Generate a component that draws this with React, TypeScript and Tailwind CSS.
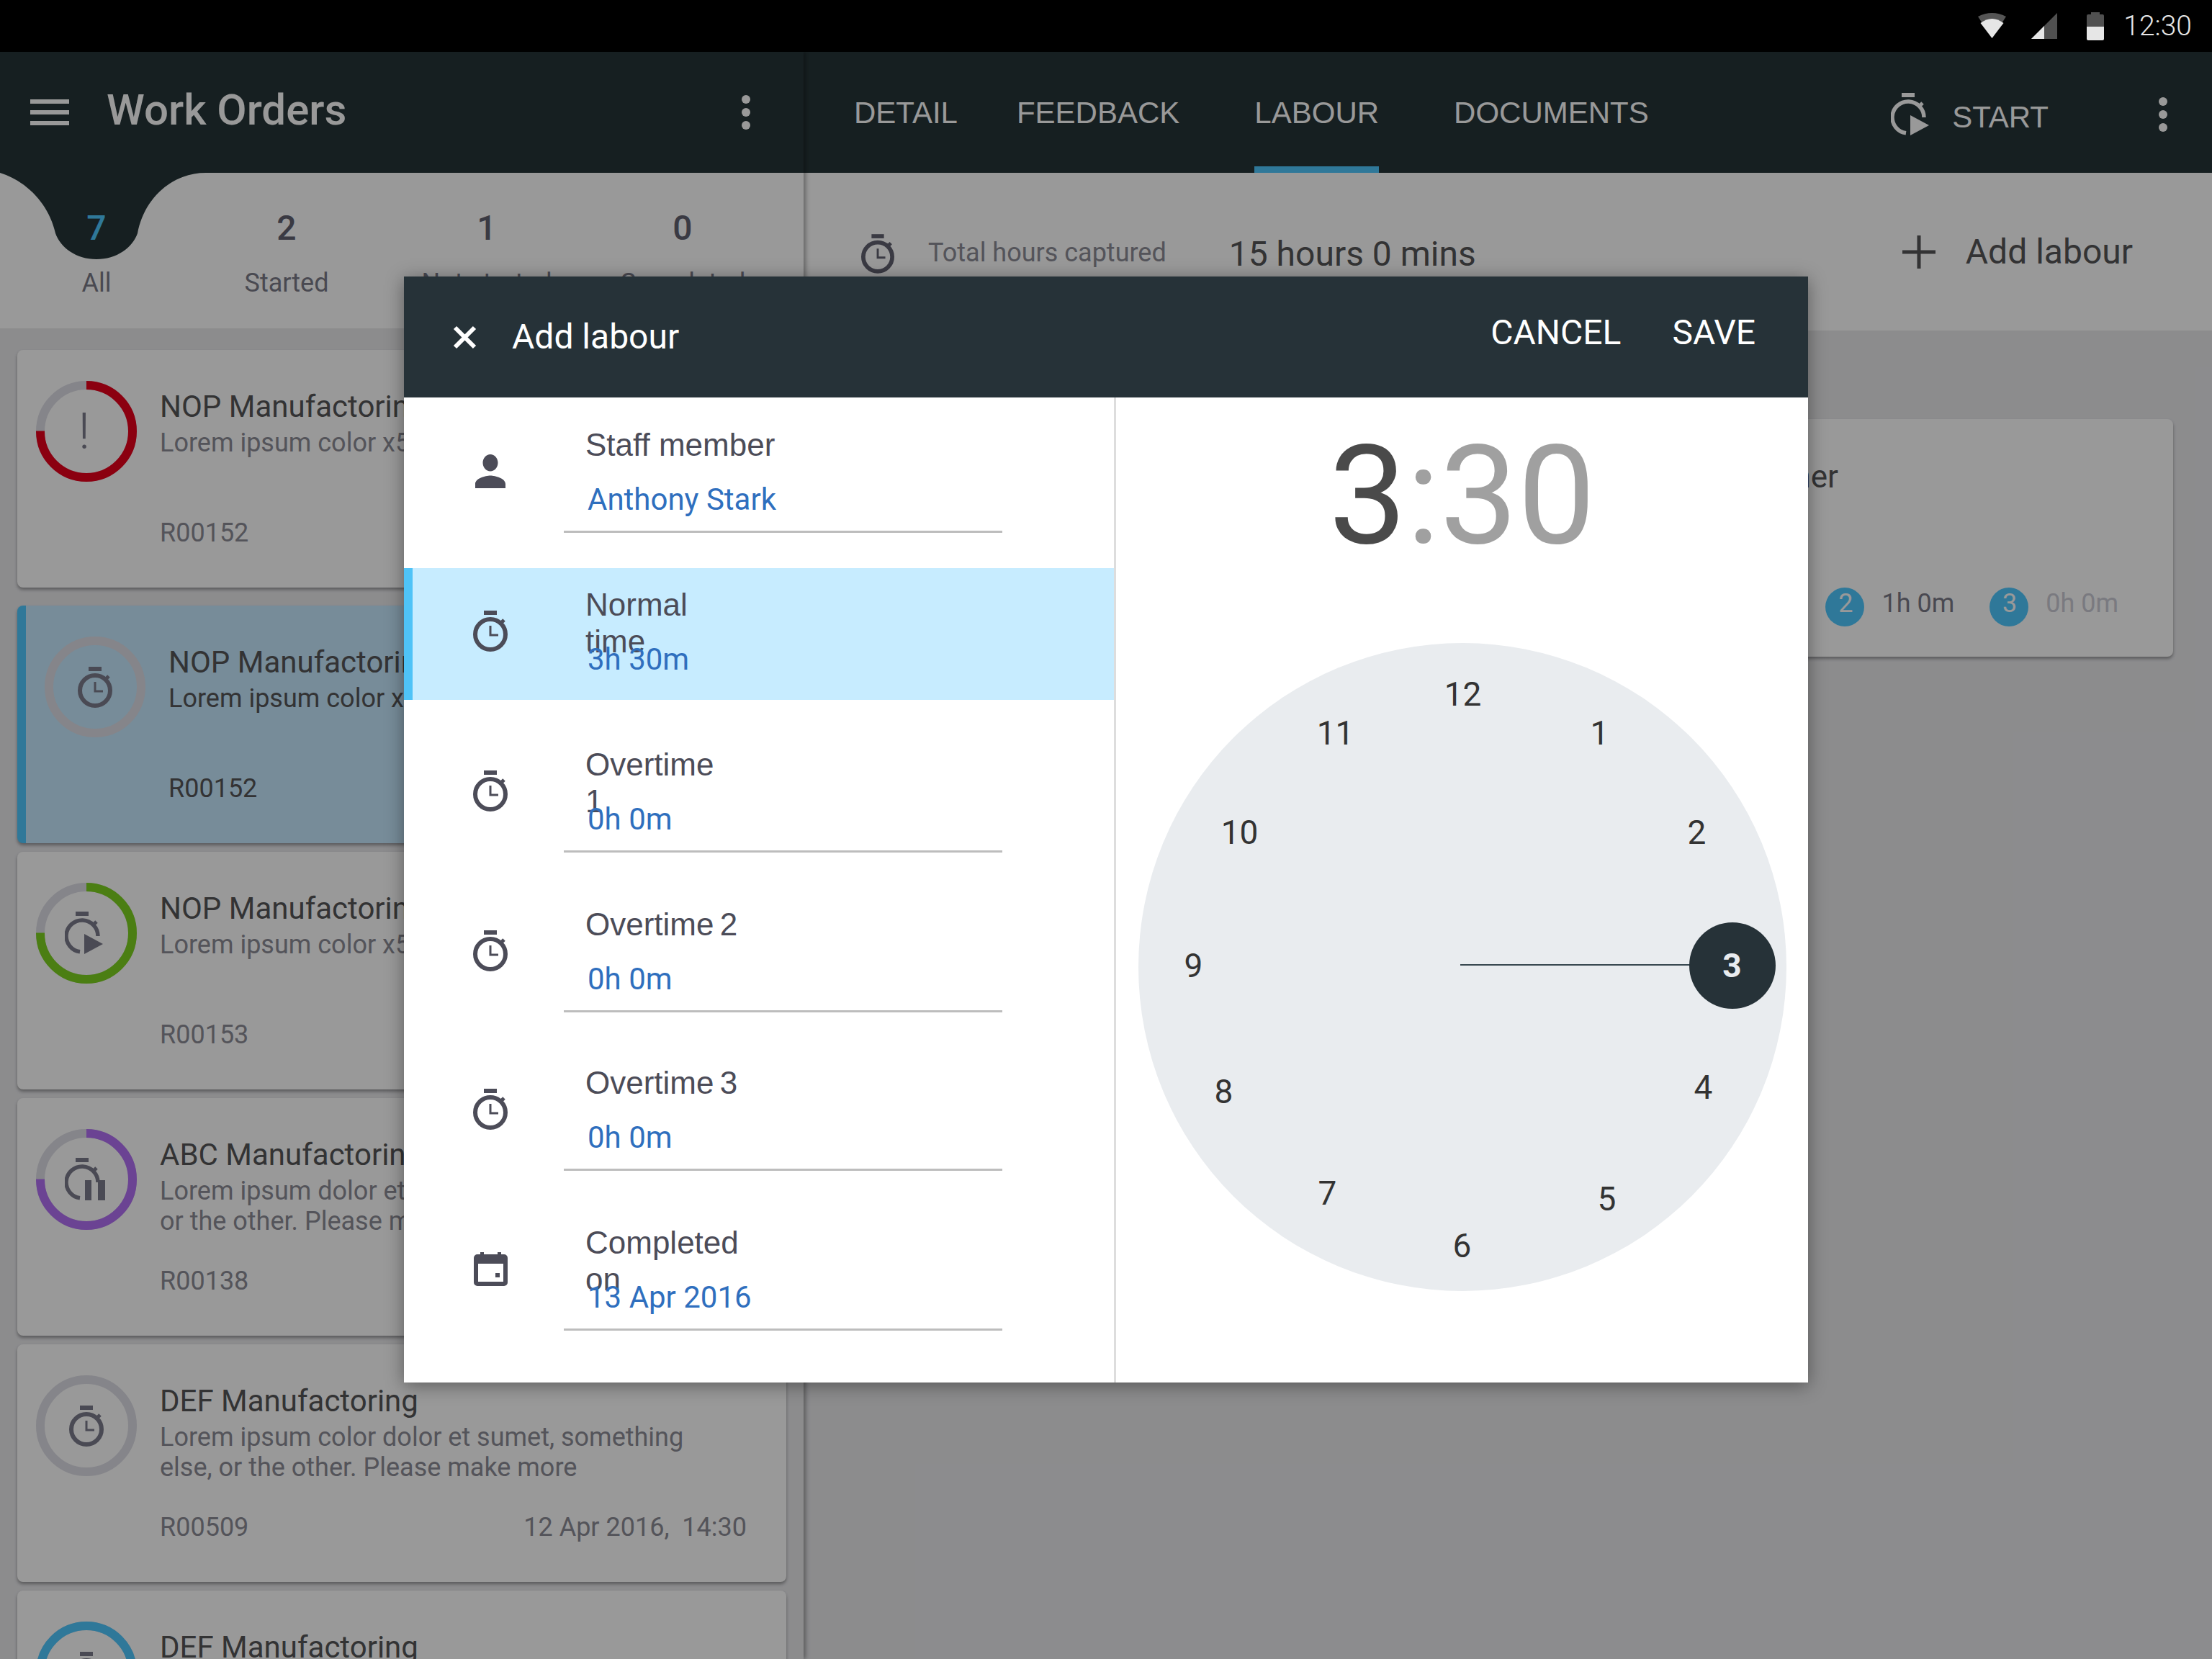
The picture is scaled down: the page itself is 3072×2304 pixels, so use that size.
const font = "font-['Roboto',sans-serif]";
const helv = "font-['Liberation_Sans',sans-serif]";

function Stopwatch({ className }: { className?: string }) {
  return (
    <svg viewBox="0 0 48 57" className={className} fill="none">
      <rect x="15" y="0" width="18" height="6" fill="currentColor" />
      <circle cx="24" cy="33" r="21" stroke="currentColor" strokeWidth="6" />
      <path d="M39 17l4-4" stroke="currentColor" strokeWidth="5" />
      <path d="M24 21v13h11" stroke="currentColor" strokeWidth="3" />
    </svg>
  );
}

function StartIcon({ className, pause }: { className?: string; pause?: boolean }) {
  return (
    <svg viewBox="0 0 60 60" className={className} fill="none">
      <rect x="15" y="0" width="18" height="6" fill="currentColor" />
      <path d="M21 55.8A22 22 0 1 1 46 34" stroke="currentColor" strokeWidth="5.5" />
      <path d="M40 18l4-4" stroke="currentColor" strokeWidth="5" />
      {pause ? (
        <path d="M28 31h9v28h-9zM46 31h10v28H46z" fill="currentColor" />
      ) : (
        <path d="M27 31l26 14-26 14z" fill="currentColor" />
      )}
    </svg>
  );
}

function Kebab() {
  return (
    <div className="flex flex-col gap-[6px]">
      <span className="h-[12px] w-[12px] rounded-full bg-white" />
      <span className="h-[12px] w-[12px] rounded-full bg-white" />
      <span className="h-[12px] w-[12px] rounded-full bg-white" />
    </div>
  );
}

function StatusBar() {
  return (
    <div className="flex h-[72px] items-center justify-end bg-black pr-[28px] text-[#e6e6e6]">
      <svg viewBox="0 0 39 35" className="h-[35px] w-[39px] -mt-[1px]">
        <path d="M0 5Q19.5-5 39 5L19.5 35z" fill="#555" />
        <path d="M3.5 14Q19.5 2 35.5 14L19.5 35z" fill="#e6e6e6" />
      </svg>
      <svg viewBox="0 0 36 36" className="ml-[35px] h-[36px] w-[36px]">
        <path d="M0 36L36 0v36z" fill="#505050" />
        <path d="M0 36l18-18v18z" fill="#e6e6e6" />
      </svg>
      <svg viewBox="0 0 24 39" className="ml-[41px] h-[39px] w-[24px]">
        <path d="M6 0h12v3h4a2 2 0 0 1 2 2v15H0V5a2 2 0 0 1 2-2h4z" fill="#505050" />
        <path d="M0 20h24v17a2 2 0 0 1-2 2H2a2 2 0 0 1-2-2z" fill="#e6e6e6" />
      </svg>
      <span className="ml-[27px] text-[39px] font-light leading-none">12:30</span>
    </div>
  );
}

type CardProps = {
  title: string;
  lines: string[];
  ref_: string;
  date?: string;
  ring?: string;
  pct?: number;
  icon: "alert" | "timer" | "play" | "pause";
  selected?: boolean;
};

function Ring({ color, pct }: { color?: string; pct?: number }) {
  return (
    <svg viewBox="0 0 140 140" className="absolute inset-0 h-[140px] w-[140px]" fill="none">
      <circle cx="70" cy="70" r="64" stroke="#dedee6" strokeWidth="12" />
      {color && (
        <circle
          cx="70"
          cy="70"
          r="64"
          stroke={color}
          strokeWidth="12"
          strokeDasharray={`${((pct ?? 0) / 100) * 402.1} 402.1`}
          transform="rotate(-90 70 70)"
        />
      )}
    </svg>
  );
}

function WorkCard({ title, lines, ref_, date, ring, pct, icon, selected }: CardProps) {
  return (
    <div
      className={
        selected
          ? "flex h-[330px] shrink-0 rounded-[8px] border-l-[12px] border-[#4fc8ff] bg-[#c6e9ff] shadow-[0_3px_4px_rgba(0,0,0,0.35)]"
          : "flex h-[330px] shrink-0 rounded-[8px] bg-white shadow-[0_3px_4px_rgba(0,0,0,0.35)]"
      }
    >
      <div className="relative ml-[26px] mt-[43px] flex h-[140px] w-[140px] shrink-0 items-center justify-center text-[#7c7c8c]">
        <Ring color={ring} pct={pct} />
        {icon === "alert" && <span className="-ml-[6px] text-[70px] font-light leading-none text-[#7c7c8c]">!</span>}
        {icon === "timer" && <Stopwatch className="h-[57px] w-[48px]" />}
        {icon === "play" && <StartIcon className="h-[60px] w-[60px]" />}
        {icon === "pause" && <StartIcon pause className="h-[60px] w-[60px]" />}
      </div>
      <div className="ml-[32px] mr-[55px] mt-[53px] min-w-0 flex-1">
        <div className="whitespace-nowrap text-[42px] leading-[52px] text-[#555558]">{title}</div>
        <div className={selected ? "mt-[3px] h-[124px] text-[36px] leading-[42px] text-[#555558]" : "mt-[3px] h-[124px] text-[36px] leading-[42px] text-[#8c8c96]"}>
          {lines.map((l) => (
            <div key={l} className="whitespace-nowrap">
              {l}
            </div>
          ))}
        </div>
        <div className={selected ? "flex justify-between text-[36px] leading-[44px] text-[#555558]" : "flex justify-between text-[36px] leading-[44px] text-[#8c8c96]"}>
          <span>{ref_}</span>
          <span className="whitespace-pre">{date}</span>
        </div>
      </div>
    </div>
  );
}

const tallies = [
  { n: "7", label: "All", w: "w-[268px]", active: true },
  { n: "2", label: "Started", w: "w-[260px]" },
  { n: "1", label: "Not started", w: "w-[296px]" },
  { n: "0", label: "Completed", w: "w-[248px]" },
];

function LeftPane() {
  return (
    <div className="relative z-10 flex h-full w-[1116px] shrink-0 flex-col overflow-hidden bg-[#e9e9ec] shadow-[3px_0_6px_rgba(0,0,0,0.35)]">
      <div className="flex h-[168px] shrink-0 items-center bg-[#263538] text-white">
        <div className="ml-[42px] flex h-[36px] w-[54px] flex-col justify-between">
          <span className="h-[6px] bg-white" />
          <span className="h-[6px] bg-white" />
          <span className="h-[6px] bg-white" />
        </div>
        <span className="ml-[52px] -mt-[6px] text-[60px] font-medium leading-none">Work Orders</span>
        <div className="ml-auto mr-[74px]">
          <Kebab />
        </div>
      </div>
      <div className="relative flex h-[216px] shrink-0 bg-white">
        <svg viewBox="0 0 286 120" className="absolute left-0 top-0 h-[120px] w-[286px]">
          <path d="M0 0C38 12 68 44 77 84C84 104 106 120 134 120C162 120 184 104 191 84C200 36 238 0 286 0Z" fill="#263538" />
        </svg>
        {tallies.map((t) => (
          <div key={t.label} className={`relative flex flex-col items-center pt-[49px] ${t.w}`}>
            <span className={t.active ? "text-[48px] font-medium leading-[56px] text-[#4fc8ff]" : "text-[48px] font-medium leading-[56px] text-[#616170]"}>{t.n}</span>
            <span className="mt-[26px] whitespace-nowrap text-[36px] leading-[44px] text-[#7b7b88]">{t.label}</span>
          </div>
        ))}
      </div>
      <div className="flex flex-col gap-[12px] px-[24px] pt-[30px]">
        <WorkCard title="NOP Manufactoring" lines={["Lorem ipsum color x5"]} ref_="R00152" ring="#e8001c" pct={75} icon="alert" />
        <div className="mt-[13px]">
          <WorkCard selected title="NOP Manufactoring" lines={["Lorem ipsum color x5"]} ref_="R00152" icon="timer" />
        </div>
        <WorkCard title="NOP Manufactoring" lines={["Lorem ipsum color x5"]} ref_="R00153" ring="#7ed321" pct={75} icon="play" />
        <WorkCard
          title="ABC Manufactoring"
          lines={["Lorem ipsum dolor et sumet", "or the other. Please make more"]}
          ref_="R00138"
          ring="#b270f5"
          pct={75}
          icon="pause"
        />
        <WorkCard
          title="DEF Manufactoring"
          lines={["Lorem ipsum color dolor et sumet, something", "else, or the other. Please make more"]}
          ref_="R00509"
          date="12 Apr 2016,  14:30"
          icon="timer"
        />
        <WorkCard title="DEF Manufactoring" lines={["Lorem ipsum color dolor et sumet"]} ref_="R00510" ring="#4fc8ff" pct={100} icon="timer" />
      </div>
    </div>
  );
}

function RightPane() {
  return (
    <div className="flex h-full min-w-0 flex-1 flex-col bg-[#e9e9ec]">
      <div className={`flex h-[168px] shrink-0 items-center bg-[#263538] pl-[70px] text-[42px] text-white ${helv}`}>
        <span>DETAIL</span>
        <span className="ml-[82px]">FEEDBACK</span>
        <span className="relative ml-[104px] flex h-full items-center">
          LABOUR
          <span className="absolute inset-x-0 bottom-0 h-[9px] bg-[#4fc8ff]" />
        </span>
        <span className="ml-[104px]">DOCUMENTS</span>
        <div className="ml-auto flex items-center pt-[6px]">
          <StartIcon className="h-[60px] w-[60px]" />
          <span className="ml-[25px] mt-[6px]">START</span>
          <div className="ml-[153px] mr-[62px]">
            <Kebab />
          </div>
        </div>
      </div>
      <div className="flex h-[219px] shrink-0 items-center bg-white pl-[76px] pr-[110px]">
        <Stopwatch className="ml-[4px] mt-[6px] h-[57px] w-[46px] text-[#616170]" />
        <span className="ml-[47px] mt-[2px] text-[36px] text-[#8c8c96]">Total hours captured</span>
        <span className="ml-[87px] mt-[6px] text-[48px] text-[#555558]">15 hours 0 mins</span>
        <svg viewBox="0 0 46 46" className="ml-auto h-[46px] w-[46px]">
          <path d="M20.5 0h5v20.5H46v5H25.5V46h-5V25.5H0v-5h20.5z" fill="#555558" />
        </svg>
        <span className="ml-[42px] text-[48px] text-[#555558]">Add labour</span>
      </div>
      <div className="pl-[24px] pr-[54px] pt-[123px]">
        <div className="h-[330px] rounded-[8px] bg-white pt-[54px] shadow-[0_3px_4px_rgba(0,0,0,0.35)]">
          <div className="h-[52px] pr-[465px] text-right text-[44px] leading-[52px] text-[#555558]">Mark Turner</div>
          <div className="mt-[128px] flex items-center justify-end pr-[76px] text-[36px] leading-[44px]">
            <span className="flex h-[54px] w-[54px] items-center justify-center rounded-full bg-[#4fc8ff] pb-[10px] pl-[2px] text-white">2</span>
            <span className="ml-[24px] -mt-[10px] text-[#7b7b88]">1h 0m</span>
            <span className="ml-[49px] flex h-[54px] w-[54px] items-center justify-center rounded-full bg-[#4fc8ff] pb-[10px] pl-[2px] text-white">3</span>
            <span className="ml-[24px] -mt-[10px] text-[#cbcbd5]">0h 0m</span>
          </div>
        </div>
      </div>
    </div>
  );
}

type Row = { label: string[]; value: string; icon: "person" | "timer" | "calendar"; active?: boolean; tight?: boolean; narrow?: boolean };

const rows: Row[] = [
  { label: ["Staff member"], value: "Anthony Stark", icon: "person" },
  { label: ["Normal", "time"], value: "3h 30m", icon: "timer", active: true },
  { label: ["Overtime", "1"], value: "0h 0m", icon: "timer" },
  { label: ["Overtime 2"], value: "0h 0m", icon: "timer", narrow: true },
  { label: ["Overtime 3"], value: "0h 0m", icon: "timer", narrow: true, tight: true },
  { label: ["Completed", "on"], value: "13 Apr 2016", icon: "calendar" },
];

function RowIcon({ icon }: { icon: Row["icon"] }) {
  if (icon === "person")
    return (
      <svg viewBox="4 4 16 16" preserveAspectRatio="none" className="h-[47px] w-[42px]">
        <path d="M12 12c2.21 0 4-1.79 4-4s-1.79-4-4-4-4 1.79-4 4 1.79 4 4 4zm0 2c-2.67 0-8 1.34-8 4v2h16v-2c0-2.66-5.33-4-8-4z" fill="#4c4c58" />
      </svg>
    );
  if (icon === "calendar")
    return (
      <svg viewBox="0 0 47 47" className="h-[47px] w-[47px]">
        <path d="M9 0h5v3h19V0h5v3h4a5 5 0 0 1 5 5v34a5 5 0 0 1-5 5H5a5 5 0 0 1-5-5V8a5 5 0 0 1 5-5h4zM6 16v25h35V16z" fill="#4c4c58" />
        <rect x="30" y="29" width="6" height="6" fill="#4c4c58" />
      </svg>
    );
  return <Stopwatch className="h-[57px] w-[48px] text-[#4c4c58]" />;
}

function FormRow({ label, value, icon, active, tight, narrow }: Row) {
  const base = active ? "border-[#4fc3f7] bg-[#c7ecff]" : "border-transparent";
  return (
    <div className={`flex h-[183px] border-l-[12px] ${base} ${tight ? "-mt-[2px]" : ""}`}>
      <div className="ml-[84px] flex h-[174px] w-[48px] shrink-0 items-center justify-center">
        <RowIcon icon={icon} />
      </div>
      <div className="ml-[78px] w-[609px] pt-[25px]">
        <div className={`-ml-[1px] h-[51px] pl-[31px] text-[44px] leading-[51px] text-[#4c4c58] ${helv} ${narrow ? "[word-spacing:-4px]" : ""}`}>
          {label.map((l) => (
            <div key={l}>{l}</div>
          ))}
        </div>
        <div className="relative mt-[26px] h-[50px] pl-[33px] text-[42px] leading-[50px] text-[#2f6fbe]">{value}</div>
        {!active && <div className="mt-[18px] h-[3px] bg-[#bdbdbd]" />}
      </div>
    </div>
  );
}

const dial = [
  { n: "12", x: 2032, y: 964 },
  { n: "1", x: 2222, y: 1018 },
  { n: "2", x: 2357, y: 1156 },
  { n: "4", x: 2366, y: 1510 },
  { n: "5", x: 2232, y: 1665 },
  { n: "6", x: 2031, y: 1730 },
  { n: "7", x: 1844, y: 1657 },
  { n: "8", x: 1700, y: 1516 },
  { n: "9", x: 1658, y: 1341 },
  { n: "10", x: 1722, y: 1156 },
  { n: "11", x: 1855, y: 1018 },
];

function Clock() {
  return (
    <div className="relative h-[900px] w-[900px] rounded-full bg-[#e9ecef]">
      {dial.map((d) => (
        <span
          key={d.n}
          className="absolute -translate-x-1/2 -translate-y-1/2 text-[46px] leading-none text-[#333]"
          style={{ left: d.x - 1581, top: d.y - 893 }}
        >
          {d.n}
        </span>
      ))}
      <div className="absolute left-[447px] top-[446px] h-[2px] w-[320px] bg-[#37474f]" />
      <div className="absolute left-[765px] top-[388px] flex h-[120px] w-[120px] items-center justify-center rounded-full bg-[#263238] text-[46px] font-bold text-[#e9ecef]">
        3
      </div>
    </div>
  );
}

function Dialog() {
  return (
    <div className="absolute left-[561px] top-[384px] z-30 flex h-[1536px] w-[1950px] flex-col bg-white shadow-[0_4px_24px_rgba(0,0,0,0.4)]">
      <div className="flex h-[168px] shrink-0 items-center bg-[#263238] text-[48px] text-white">
        <svg viewBox="0 0 33 33" className="ml-[68px] h-[33px] w-[33px]">
          <path d="M3 3l27 27M30 3L3 30" stroke="#fff" strokeWidth="6" />
        </svg>
        <span className="ml-[49px]">Add labour</span>
        <span className="ml-auto -mt-[12px]">CANCEL</span>
        <span className="ml-[71px] mr-[73px] -mt-[12px]">SAVE</span>
      </div>
      <div className="flex min-h-0 flex-1">
        <div className="flex w-[989px] shrink-0 flex-col gap-[39px] border-r-[3px] border-[#ddd] pt-[15px]">
          {rows.map((r) => (
            <FormRow key={r.value + r.label[0]} {...r} />
          ))}
        </div>
        <div className="flex flex-1 flex-col items-center">
          <div className="mt-[34px] flex h-[206px] items-center text-[192px] leading-none">
            <span className="text-[#4a4a4a]">3</span>
            <span className="text-[#a0a0a0]">:30</span>
          </div>
          <div className="mt-[101px]">
            <Clock />
          </div>
        </div>
      </div>
    </div>
  );
}

export default function App() {
  return (
    <div className={`relative h-[2304px] w-[3072px] overflow-hidden bg-black ${font}`}>
      <StatusBar />
      <div className="flex h-[2232px]">
        <LeftPane />
        <RightPane />
      </div>
      {/* scrim behind the dialog */}
      <div className="absolute inset-x-0 bottom-0 top-[72px] z-20 bg-black/40" />
      <Dialog />
    </div>
  );
}
